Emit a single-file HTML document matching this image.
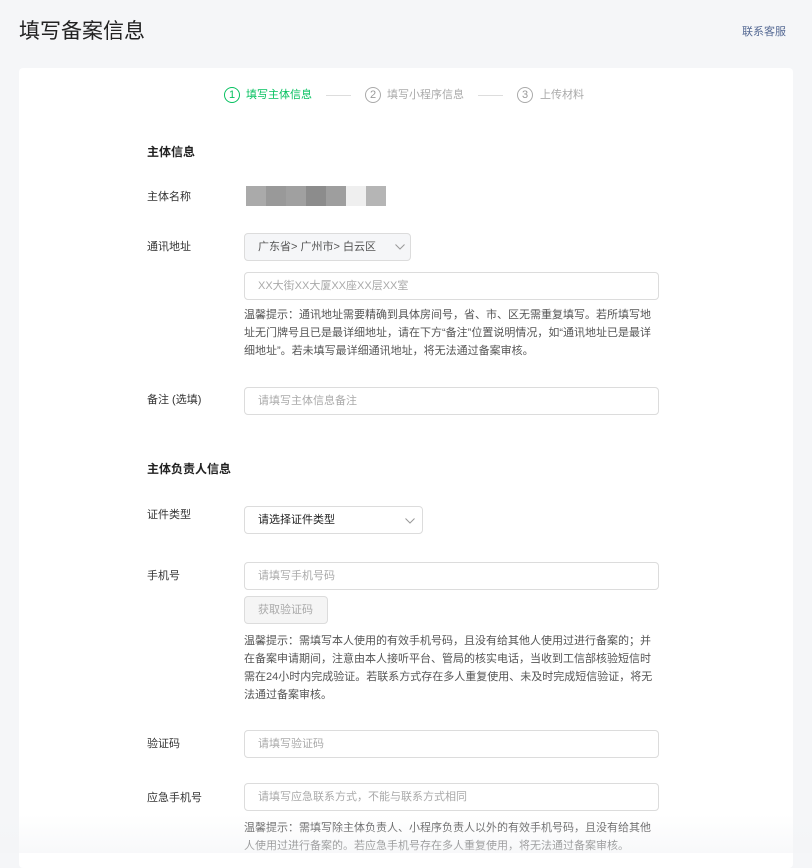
<!DOCTYPE html>
<html><head><meta charset="utf-8"><style>
*{margin:0;padding:0;box-sizing:border-box}
body{width:812px;height:853px;background:#f5f6f8;font-family:"Liberation Sans","Noto Sans CJK SC",sans-serif;position:relative;overflow:hidden;color:#333}
.a{position:absolute;white-space:nowrap}
.card{position:absolute;left:19px;top:68px;width:774px;height:800px;background:#fff;border-radius:4px}
.lbl{font-size:11px;color:#333;left:147px;line-height:14px}
.h{font-size:12px;font-weight:bold;color:#222;left:147px;line-height:14px}
.in{position:absolute;left:244px;width:415px;height:28px;border:1px solid #dcdcdc;border-radius:4px;font-size:11px;color:#aaa;padding-left:13px;line-height:26px}
.hint{position:absolute;left:244px;width:412px;font-size:11px;color:#555;line-height:18px}
.circ{position:absolute;width:16px;height:16px;border:1px solid #aaa;border-radius:50%;font-size:11px;text-align:center;line-height:14px;color:#999;top:87px}
.st{font-size:11px;color:#aaa;top:88px;line-height:14px}
.ln{position:absolute;top:95px;height:1px;background:#ddd;width:25px}
.fade{position:absolute;left:0;top:815px;width:812px;height:38px;background:linear-gradient(rgba(255,255,255,0),rgba(243,244,246,.6))}
</style></head><body>
<div class="a" style="left:19px;top:18px;font-size:21px;color:#222;line-height:28px">填写备案信息</div>
<div class="a" style="left:742px;top:25px;font-size:11px;color:#576b95;line-height:14px">联系客服</div>
<div class="card"></div>
<div class="circ" style="left:224px;border-color:#07c160;color:#07c160">1</div>
<div class="a st" style="left:246px;color:#07c160">填写主体信息</div>
<div class="ln" style="left:326px"></div>
<div class="circ" style="left:365px">2</div>
<div class="a st" style="left:387px">填写小程序信息</div>
<div class="ln" style="left:478px"></div>
<div class="circ" style="left:517px">3</div>
<div class="a st" style="left:540px">上传材料</div>

<div class="a h" style="top:145px">主体信息</div>
<div class="a lbl" style="top:190px">主体名称</div>
<div class="a" style="left:246px;top:186px;height:20px;width:140px;display:flex">
<div style="width:20px;background:#aaa"></div><div style="width:20px;background:#999"></div><div style="width:20px;background:#a0a0a0"></div><div style="width:20px;background:#8c8c8c"></div><div style="width:20px;background:#9e9e9e"></div><div style="width:20px;background:#efefef"></div><div style="width:20px;background:#b5b5b5"></div></div>

<div class="a lbl" style="top:240px">通讯地址</div>
<div class="in" style="top:233px;width:167px;background:#f5f6f8;color:#555">广东省&gt; 广州市&gt; 白云区<svg style="position:absolute;left:150px;top:10px" width="10" height="6"><path d="M0.5 0.5L5 5L9.5 0.5" fill="none" stroke="#999"/></svg></div>
<div class="in" style="top:272px">XX大街XX大厦XX座XX层XX室</div>
<div class="hint" style="top:306px">温馨提示：通讯地址需要精确到具体房间号，省、市、区无需重复填写。若所填写地址无门牌号且已是最详细地址，请在下方“备注”位置说明情况，如“通讯地址已是最详细地址”。若未填写最详细通讯地址，将无法通过备案审核。</div>
<div class="a lbl" style="top:393px">备注 (选填)</div>
<div class="in" style="top:387px">请填写主体信息备注</div>

<div class="a h" style="top:462px">主体负责人信息</div>
<div class="a lbl" style="top:508px">证件类型</div>
<div class="in" style="top:506px;width:179px;color:#222">请选择证件类型<svg style="position:absolute;left:160px;top:11px" width="10" height="6"><path d="M0.5 0.5L5 5L9.5 0.5" fill="none" stroke="#999"/></svg></div>
<div class="a lbl" style="top:569px">手机号</div>
<div class="in" style="top:562px">请填写手机号码</div>
<div class="in" style="top:596px;width:84px;background:#f5f5f5;color:#aaa">获取验证码</div>
<div class="hint" style="top:632px">温馨提示：需填写本人使用的有效手机号码，且没有给其他人使用过进行备案的；并在备案申请期间，注意由本人接听平台、管局的核实电话，当收到工信部核验短信时需在24小时内完成验证。若联系方式存在多人重复使用、未及时完成短信验证，将无法通过备案审核。</div>
<div class="a lbl" style="top:737px">验证码</div>
<div class="in" style="top:730px">请填写验证码</div>
<div class="a lbl" style="top:791px">应急手机号</div>
<div class="in" style="top:783px">请填写应急联系方式，不能与联系方式相同</div>
<div class="hint" style="top:819px">温馨提示：需填写除主体负责人、小程序负责人以外的有效手机号码，且没有给其他人使用过进行备案的。若应急手机号存在多人重复使用，将无法通过备案审核。</div>
<div class="fade"></div>
</body></html>
